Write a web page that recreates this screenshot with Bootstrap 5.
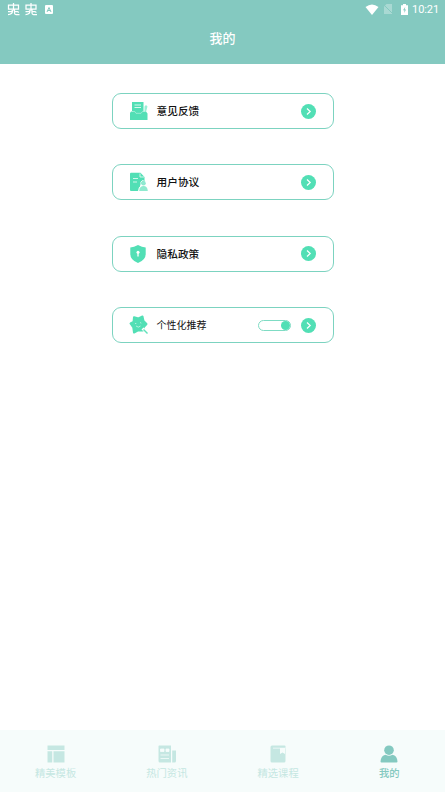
<!DOCTYPE html>
<html lang="zh-CN">
<head>
<meta charset="utf-8">
<meta name="viewport" content="width=device-width, initial-scale=1">
<title>我的</title>
<link rel="stylesheet" href="https://cdn.jsdelivr.net/npm/bootstrap@5.3.0/dist/css/bootstrap.min.css">
<style>
body{font-family:"Noto Sans CJK SC",sans-serif;color:#111;height:792px;overflow:hidden}
svg{display:block;flex:none}
.top-bar{background:#84c9c0;height:64px}
.status-bar{height:18px;padding:0 6px 0 7px}
.input-badge{margin-left:7px}
.clock{font:400 11px/18px Roboto,sans-serif;letter-spacing:-.1px;margin-left:4px;padding-top:1px}
.page-title{font-size:13px;line-height:20px;font-weight:500;padding-top:10px}
.menu-list{width:222px;padding-top:29px;gap:35.4px}
.menu-item{height:36px;border:1px solid #7cd3c0;border-radius:9px;padding:0 17px 0 16px;font-size:10.7px;line-height:16px;font-weight:500;color:#111}
.menu-item .label{margin-left:9px}
.menu-item.plain{font-weight:400;font-size:10px}
.toggle{width:33px;height:11px;border:1px solid #7fdcc4;border-radius:6px;margin-right:10px}
.knob{width:9px;height:9px;border-radius:50%;background:#52dfb5}
.bottom-nav{height:62px;background:#f6fcfb;padding-top:15px}
.tab{color:#c5e7e2;font-size:10.3px;line-height:16px;gap:1px}
.tab.current{color:#84c9c0;font-weight:500}
</style>
</head>
<body class="d-flex flex-column bg-white">
<header class="top-bar text-white">
  <div class="status-bar d-flex align-items-center">
    <svg width="13" height="14" viewBox="0 0 13 14" fill="none" stroke="#fff" stroke-width="1.25"><path d="M1.500 3h10v4h-10zM6.500 1v7.500M1 9.500h2.500q2 0 2-1.500M5.500 8.500q0 4-4.500 4M7.500 7v4q0 1.500 1.500 1.500h3.500M7.500 9.500h3q1 0 1 1.200"/></svg>
    <svg class="ms-1" width="14" height="14" viewBox="-.5 0 14 14" fill="none" stroke="#fff" stroke-width="1.25"><path d="M1.500 3h10v4h-10zM6.500 1v7.500M1 9.500h2.500q2 0 2-1.500M5.500 8.500q0 4-4.500 4M7.500 7v4q0 1.500 1.500 1.500h3.500M7.500 9.500h3q1 0 1 1.200"/></svg>
    <svg class="input-badge" width="8" height="9" viewBox="0 0 8 9"><rect width="8" height="9" rx="1" fill="#fff"/><path d="M2 7l2-4.500L6 7M2.700 5.500h2.600" fill="none" stroke="#84c9c0"/></svg>
    <svg class="ms-auto" width="14" height="11" viewBox="0 0 14 11"><path d="M.5 3Q7-2 13.500 3L7 11z" fill="#fff"/></svg>
    <svg class="ms-1" width="10" height="10" viewBox="0 0 10 10"><path d="M3.500 0H9v10H1V2.500z" fill="#fff" opacity=".3"/><path d="M1 1l8 8" stroke="#84c9c0"/></svg>
    <svg class="ms-2" width="7" height="11" viewBox="0 0 7 11"><path d="M0 1.200h2V0h3v1.200h2V11H0z" fill="#fff"/><path d="M4.200 3L2 6.300h1.400V9L5 5.500H3.800z" fill="#84c9c0"/></svg>
    <span class="clock">10:21</span>
  </div>
  <h1 class="page-title text-center m-0">我的</h1>
</header>

<main class="flex-grow-1">
  <div class="menu-list mx-auto d-flex flex-column">
    <a class="menu-item d-flex align-items-center text-decoration-none" href="#">
      <svg width="19" height="20" viewBox="0 0 19 20"><path d="M3 1h11.500v10l-2 2h-6L3 10z" fill="#52dfb5"/><path d="M5.500 4h6.500M5.500 6.500h6.500" stroke="#d8f8ee"/><path d="M15.500 5.500 17 4l1.500 1.500L17 11h-1.500z" fill="#9aefd5"/><path d="M2 10.500h3.500l1.500 2h5l1.500-2H17l1.500 2V19H1v-7z" fill="#52dfb5"/><path d="M3 10.500h2.700l1.300 1.800h5l1.500-1.800h3" fill="none" stroke="#c6f5e7" stroke-width=".6"/></svg>
      <span class="label">意见反馈</span>
      <svg class="ms-auto" width="15" height="15" viewBox="0 0 15 15"><circle cx="7.500" cy="7.500" r="7.500" fill="#52dfb5"/><path d="M6 4.500l3.200 3L6 10.500" fill="none" stroke="#fff" stroke-width="1.200"/></svg>
    </a>
    <a class="menu-item d-flex align-items-center text-decoration-none" href="#">
      <svg width="19" height="20" viewBox="0 0 19 20"><path d="M2 .8h9.500L15.500 5v4.500l-4 3-2 6.500H2q-1 0-1-1V2q0-1.200 1-1.200z" fill="#52dfb5"/><path d="M11 1.500V5h4M4 6.500h5M4 10h4" fill="none" stroke="#dff9f1" stroke-width=".9"/><path d="M9.500 19.500q0-4.500 3-6Q10.500 9 14.500 8.500" fill="none" stroke="#fff"/><circle cx="14.500" cy="11.300" r="2.300" fill="#8fe9d0"/><path d="M10.200 19q.3-5 4.300-5t4.300 5z" fill="#8feacf"/></svg>
      <span class="label">用户协议</span>
      <svg class="ms-auto" width="15" height="15" viewBox="0 0 15 15"><circle cx="7.500" cy="7.500" r="7.500" fill="#52dfb5"/><path d="M6 4.500l3.200 3L6 10.500" fill="none" stroke="#fff" stroke-width="1.200"/></svg>
    </a>
    <a class="menu-item d-flex align-items-center text-decoration-none" href="#">
      <svg width="19" height="20" viewBox="0 0 19 20"><path d="M9 1q4 2.300 7.700 2.600V10q0 6-7.700 9Q1.300 16 1.300 10V3.600Q5 3.300 9 1z" fill="#52dfb5"/><circle cx="9" cy="8.200" r="1.500" fill="#fff"/><path d="M9 8v4.500" stroke="#fff" stroke-width="1.300"/></svg>
      <span class="label">隐私政策</span>
      <svg class="ms-auto" width="15" height="15" viewBox="0 0 15 15"><circle cx="7.500" cy="7.500" r="7.500" fill="#52dfb5"/><path d="M6 4.500l3.200 3L6 10.500" fill="none" stroke="#fff" stroke-width="1.200"/></svg>
    </a>
    <div class="menu-item plain d-flex align-items-center">
      <svg width="19" height="20" viewBox="0 0 19 20"><path d="M5 2.200 9.500 3.500 13.500 1.500 14.500 6 17.500 9 14.800 12l-.8 3.500-4.500-.3L5 17.500 4.300 12.500 1.500 8.500l3-1.500z" fill="#52dfb5" stroke="#52dfb5" stroke-width="2" stroke-linejoin="round"/><path d="M7 11q2.500 2.300 4.500 0M6 8.500h1.300M11 7.500l1.300.7" fill="none" stroke="#c7f6e7" stroke-width=".8"/><path d="M13.500 13.500l5 4.500" stroke="#fff" stroke-width="3"/><path d="M14.500 14.500l4 4" stroke="#62e2bb" stroke-width="1.400"/></svg>
      <span class="label">个性化推荐</span>
      <span class="toggle ms-auto d-flex align-items-center justify-content-end"><span class="knob"></span></span>
      <svg width="15" height="15" viewBox="0 0 15 15"><circle cx="7.500" cy="7.500" r="7.500" fill="#52dfb5"/><path d="M6 4.500l3.200 3L6 10.500" fill="none" stroke="#fff" stroke-width="1.200"/></svg>
    </div>
  </div>
</main>

<nav class="bottom-nav row g-0 text-center">
  <div class="tab col d-flex flex-column align-items-center">
    <svg width="18" height="19" viewBox="0 0 18 19" fill="currentColor"><path d="M.5 .5h17V5H.5zM.5 6.200h4.700V17.500H.5zM6.500 6.200h11v11.300h-11z"/></svg>
    <span>精美模板</span>
  </div>
  <div class="tab col d-flex flex-column align-items-center">
    <svg width="18" height="19" viewBox="0 0 18 19"><path d="M1 .5h12v17H2Q.5 17.500.5 16V1zM14.200 5.500H18V16q0 1.500-1.500 1.500h-2.300z" fill="currentColor"/><path d="M2.500 4H6v2.500H2.500zM8 4h3v2.500H8zM2.500 10h8.500M2.500 13.500h8.500" fill="#f6fcfb" stroke="#f6fcfb" stroke-width=".8"/></svg>
    <span>热门资讯</span>
  </div>
  <div class="tab col d-flex flex-column align-items-center">
    <svg width="18" height="19" viewBox="0 0 18 19"><path d="M3 .5h12.500q1 0 1 1V16q0 1.500-1.500 1.500H3q-1.500 0-1.500-1.500V2Q1.500.5 3 .5z" fill="currentColor"/><path d="M4 2.800h12.500V3.500H16V9l-2.500-1.500L11 9V3.500H4z" fill="#f6fcfb"/></svg>
    <span>精选课程</span>
  </div>
  <div class="tab current col d-flex flex-column align-items-center">
    <svg width="18" height="19" viewBox="0 0 18 19" fill="currentColor"><circle cx="9" cy="5.200" r="4.800"/><path d="M.5 16.500q.5-6 5-6.800Q9 12 12.500 9.700q4.500.8 5 6.800 0 1-1 1h-15q-1 0-1-1z"/></svg>
    <span>我的</span>
  </div>
</nav>
<script src="https://cdn.jsdelivr.net/npm/bootstrap@5.3.0/dist/js/bootstrap.bundle.min.js"></script>
</body>
</html>
